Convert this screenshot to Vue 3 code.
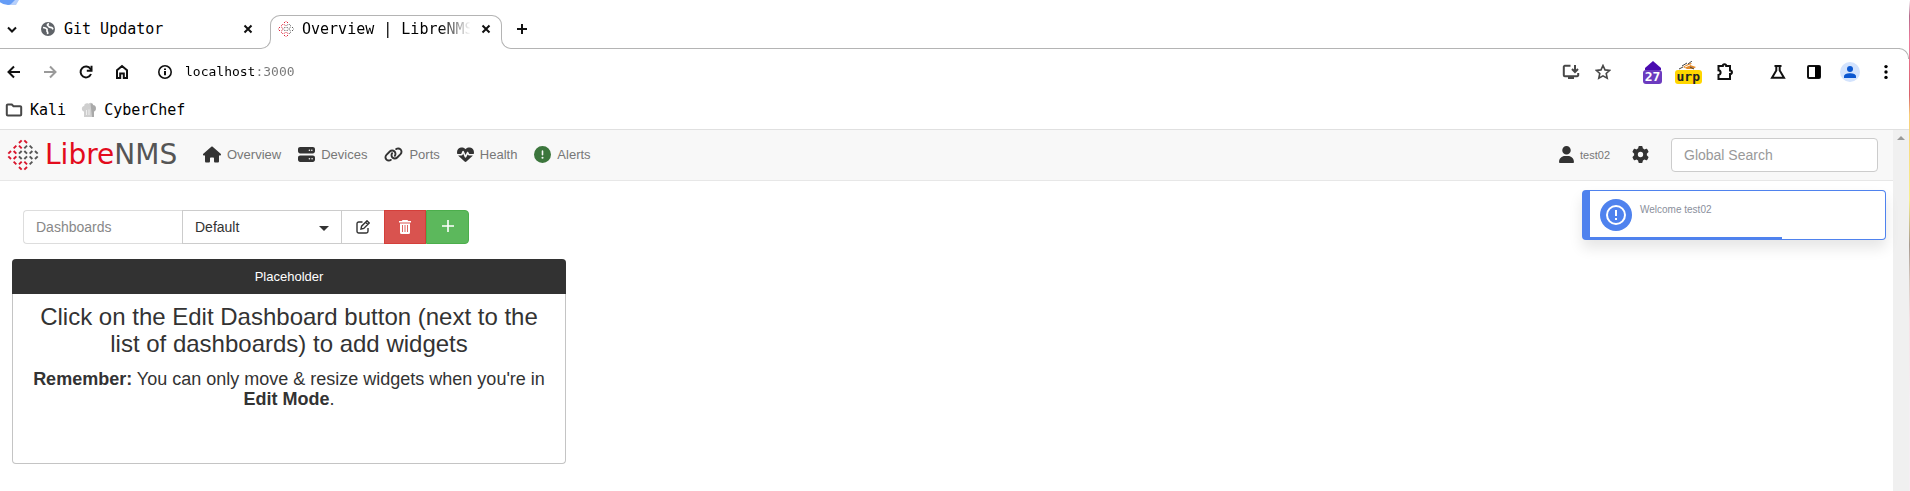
<script setup>
import { ref } from 'vue'

const rows = ['rr', 'rrgg', 'rrgggg', 'rrgggg', 'rrrg', 'rr']
const step = 16 / 3
const dashes = rows.flatMap((row, r) =>
  [...row].map((tone, c) => {
    const x = 16 + (c - (row.length - 1) / 2) * step
    const y = step / 2 + r * step
    const rising = (c % 2 === 0) === (r < 3)
    const d = 1.35
    return {
      x1: x - d,
      x2: x + d,
      y1: rising ? y + d : y - d,
      y2: rising ? y - d : y + d,
      stroke: tone === 'r' ? '#d9152c' : '#555555',
    }
  })
)

const menu = [
  { label: 'Overview', w: 18, box: '0 0 576 512', d: 'M575.8 255.5c0 18-15 32.1-32 32.1l-32 0 .7 160.2c0 2.7-.2 5.4-.5 8.1l0 16.2c0 22.1-17.9 40-40 40l-16 0c-1.1 0-2.2 0-3.3-.1c-1.4 .1-2.8 .1-4.2 .1L416 512l-24 0c-22.1 0-40-17.9-40-40l0-24 0-64c0-17.7-14.3-32-32-32l-64 0c-17.7 0-32 14.3-32 32l0 64 0 24c0 22.1-17.9 40-40 40l-24 0-31.9 0c-1.5 0-3-.1-4.5-.2c-1.2 .1-2.4 .2-3.6 .2l-16 0c-22.1 0-40-17.9-40-40l0-112c0-.9 0-1.9 .1-2.8l0-69.7-32 0c-18 0-32-14-32-32.1c0-9 3-17 10-24L266.4 8c7-7 15-8 22-8s15 2 21 7L564.8 231.5c8 7 12 15 11 24z' },
  { label: 'Devices', w: 17, box: '0 0 512 512', d: 'M64 32C28.7 32 0 60.7 0 96l0 64c0 35.3 28.7 64 64 64l384 0c35.3 0 64-28.7 64-64l0-64c0-35.3-28.7-64-64-64L64 32zm280 72a24 24 0 1 1 0 48 24 24 0 1 1 0-48zm48 24a24 24 0 1 1 48 0 24 24 0 1 1 -48 0zM64 288c-35.3 0-64 28.7-64 64l0 64c0 35.3 28.7 64 64 64l384 0c35.3 0 64-28.7 64-64l0-64c0-35.3-28.7-64-64-64L64 288zm280 72a24 24 0 1 1 0 48 24 24 0 1 1 0-48zm56 24a24 24 0 1 1 48 0 24 24 0 1 1 -48 0z' },
  { label: 'Ports', w: 19, box: '0 0 640 512', d: 'M579.8 267.7c56.5-56.5 56.5-148 0-204.5c-50-50-128.8-56.5-186.3-15.4l-1.6 1.1c-14.4 10.3-17.7 30.3-7.4 44.6s30.3 17.7 44.6 7.4l1.6-1.1c32.1-22.9 76-19.3 103.8 8.6c31.5 31.5 31.5 82.5 0 114L422.3 334.8c-31.5 31.5-82.5 31.5-114 0c-27.9-27.9-31.5-71.8-8.6-103.8l1.1-1.6c10.3-14.4 6.9-34.4-7.4-44.6s-34.4-6.9-44.6 7.4l-1.1 1.6C206.5 251.2 213 330 263 380c56.5 56.5 148 56.5 204.5 0L579.8 267.7zM60.2 244.3c-56.5 56.5-56.5 148 0 204.5c50 50 128.8 56.5 186.3 15.4l1.6-1.1c14.4-10.3 17.7-30.3 7.4-44.6s-30.3-17.7-44.6-7.4l-1.6 1.1c-32.1 22.9-76 19.3-103.8-8.6C74 372 74 321 105.5 289.5L217.7 177.2c31.5-31.5 82.5-31.5 114 0c27.9 27.9 31.5 71.8 8.6 103.9l-1.1 1.6c-10.3 14.4-6.9 34.4 7.4 44.6s34.4 6.9 44.6-7.4l1.1-1.6C433.5 260.8 427 182 377 132c-56.5-56.5-148-56.5-204.5 0L60.2 244.3z' },
  { label: 'Health', w: 17, box: '0 0 512 512', d: 'M228.3 469.1L47.6 300.4c-4.2-3.9-8.2-8.1-11.9-12.4l87 0c22.6 0 43-13.6 51.7-34.5l10.5-25.2 49.3 109.5c3.8 8.5 12.1 14 21.4 14.1s17.8-5 22-13.3L320 253.7l1.7 3.4c9.5 19 28.9 31 50.1 31l104.5 0c-3.7 4.3-7.7 8.5-11.9 12.4L283.7 469.1c-7.5 7-17.4 10.9-27.7 10.9s-20.2-3.9-27.7-10.9zM503.7 240l-132 0c-3 0-5.8-1.7-7.2-4.4l-23.2-46.3c-4.1-8.1-12.4-13.3-21.5-13.3s-17.4 5.1-21.5 13.3l-41.4 82.8L205.9 158.2c-3.9-8.7-12.7-14.3-22.2-14.1s-18.1 5.9-21.8 14.8l-31.8 76.3c-1.2 3-4.2 4.9-7.4 4.9L16 240c-2.6 0-5 .4-7.3 1.1C3 225.2 0 208.2 0 190.9l0-5.8c0-69.9 50.5-129.5 119.4-141C165 36.5 211.4 51.4 244 84l12 12 12-12c32.6-32.6 79-47.5 124.6-39.9C461.5 55.6 512 115.2 512 185.1l0 5.8c0 16.9-2.8 33.5-8.3 49.1z' },
  { label: 'Alerts', w: 17, box: '0 0 512 512', ok: true, d: 'M256 512A256 256 0 1 0 256 0a256 256 0 1 0 0 512zm0-384c13.3 0 24 10.7 24 24l0 112c0 13.3-10.7 24-24 24s-24-10.7-24-24l0-112c0-13.3 10.7-24 24-24zM224 352a32 32 0 1 1 64 0 32 32 0 1 1 -64 0z' },
]

const address = ref('localhost:3000')
const search = ref('')
const dashboard = ref('Default')
const progress = 65
</script>

<template>
  <div class="desktop">
    <svg width="0" height="0" class="defs" aria-hidden="true">
      <symbol id="mark" viewBox="0 0 32 32">
        <line v-for="(s, i) in dashes" :key="i" v-bind="s" stroke-width="1.9" />
      </symbol>
    </svg>
    <div class="browser">
      <header class="strip">
        <svg class="orb" width="19" height="5" viewBox="0 0 19 5"><circle cx="8" cy="-8" r="13" fill="#669df6" /><path d="M10 5L15 0h4L16 5z" fill="#b7d0fb" /></svg>
        <div class="strip-left">
          <button class="ico chevron" aria-label="Search tabs"><svg width="24" height="24" viewBox="0 0 24 24"><path d="M8 10.500l4 4 4-4" class="ln" /></svg></button>
          <svg class="globe" width="14" height="14" viewBox="0 0 14 14"><circle cx="7" cy="7" r="7" fill="#5f6368" /><path d="M2 5.500c2 .2 3.500.5 4 1.700.4 1.300-.6 1.600.4 2.600.5.600.2 1.500.3 2.400M8 1.600c-1.700.6-2.100 1.500-.9 2.300.9.600 1.200 1.700 2.600 1.500 1.200-.1 1.800.7 2.300 1.900" fill="none" stroke="#fff" stroke-width="1.700" /></svg>
          <span class="tab-title">Git Updator</span>
          <button class="ico close" aria-label="Close Git Updator"><svg width="16" height="16" viewBox="0 0 16 16"><path d="M4.500 4.500l7 7M11.500 4.500l-7 7" class="ln" /></svg></button>
        </div>
        <i class="foot foot-l"></i>
        <div class="tab">
          <svg width="16" height="16" class="fav"><use href="#mark" /></svg>
          <span class="tab-title fade">Overview | LibreNMS</span>
          <button class="ico close" aria-label="Close Overview"><svg width="16" height="16" viewBox="0 0 16 16"><path d="M4.500 4.500l7 7M11.500 4.500l-7 7" class="ln" /></svg></button>
        </div>
        <i class="foot foot-r"></i>
        <div class="strip-rest">
          <button class="ico" aria-label="New tab"><svg width="16" height="16" viewBox="0 0 16 16"><path d="M8 3v10M3 8h10" class="ln" /></svg></button>
        </div>
      </header>

      <div class="toolbar">
        <button class="ico" aria-label="Back"><svg width="16" height="16" viewBox="0 0 16 16"><path d="M14 8H3M8 2.500L2.500 8 8 13.500" class="ln" /></svg></button>
        <button class="ico" aria-label="Forward"><svg width="16" height="16" viewBox="0 0 16 16"><path d="M2 8h11M8 2.500L13.500 8 8 13.500" class="ln dim" /></svg></button>
        <button class="ico" aria-label="Reload"><svg width="16" height="16" viewBox="0 0 16 16"><path d="M13 10A5.400 5.400 0 1 1 12.500 5L13.500 6.500" class="ln" /><path d="M13.500 1.800v5H8.800" class="ln" /></svg></button>
        <button class="ico" aria-label="Home"><svg width="16" height="16" viewBox="0 0 16 16"><path d="M3 14V6.300L8 2l5 4.300V14H9.800V9.500H6.200V14z" class="ln" /></svg></button>
        <button class="ico info" aria-label="Site information"><svg width="16" height="16" viewBox="0 0 16 16"><circle cx="8" cy="8" r="6.200" class="ln thin" /><path d="M8 7v4.200M8 4.400v1.500" class="ln" /></svg></button>
        <input class="address" v-model="address" type="text" aria-label="Address" />
        <div class="tools">
          <button class="ico" aria-label="Install page"><svg width="18" height="16" viewBox="0 0 18 16"><path d="M8.500 1.800H2.800a1 1 0 0 0-1 1v8.400a1 1 0 0 0 1 1h12.400a1 1 0 0 0 1-1V9M13 1v6.500M10 5l3 3 3-3" class="ln soft" /><path d="M6 13h6v2H6z" fill="#474747" /></svg></button>
          <button class="ico star" aria-label="Bookmark page"><svg width="16" height="16" viewBox="0 0 16 16"><path d="M8 1.500l2 4.400 4.700.5-3.500 3.100 1 4.700L8 11.800l-4.200 2.400 1-4.700-3.500-3.100 4.700-.5z" class="ln soft thin" /></svg></button>
          <button class="ext violet" aria-label="Extension, 27 items"><svg width="20" height="9" viewBox="0 0 20 9"><path d="M10 0l8 7v2H2V7z" fill="#4a0bb0" /></svg><b>27</b></button>
          <button class="ext yellow" aria-label="Extension urp"><svg width="20" height="9" viewBox="0 0 20 9"><path d="M5 6c3-2 6-4 9-4l-2 2 6 2-3 2H9z" fill="#e58b2a" /><path d="M4 5l5-3M10 3l4-3M1 8l4-2M12 6l4 2" stroke="#444" stroke-width="1" /><path d="M7 6l5-2" stroke="#fff" /></svg><b>urp</b></button>
          <button class="ico puzzle" aria-label="Extensions"><svg width="18" height="18" viewBox="0 0 18 18"><path d="M2.500 3h4.300C6.800.8 10.200.8 10.200 3H14v4.500c2.600 0 2.600 3.600 0 3.600V16H2.500v-4.100c2.800-.3 2.800-4.300 0-4.600z" class="ln" /></svg></button>
          <button class="ico flask" aria-label="Experiments"><svg width="16" height="16" viewBox="0 0 16 16"><path d="M4.500 2h7M6.300 2v4.500L2 13.800h12L9.700 6.500V2" class="ln" /></svg></button>
          <button class="ico" aria-label="Side panel"><svg width="16" height="16" viewBox="0 0 16 16"><rect x="2" y="2" width="12" height="12" rx="1" class="ln" /><path d="M9 2h5v12H9z" /></svg></button>
          <button class="ico profile" aria-label="Profile"><svg width="20" height="20" viewBox="0 0 20 20"><circle cx="10" cy="10" r="10" fill="#d3e3fd" /><circle cx="10" cy="7" r="3" fill="#0b57d0" /><path d="M4 16v-1.500C4 12 7.500 11.300 10 11.300s6 .7 6 3.200V16z" fill="#0b57d0" /></svg></button>
          <button class="ico" aria-label="Menu"><svg width="16" height="16" viewBox="0 0 16 16"><circle cx="8" cy="2.600" r="1.700" /><circle cx="8" cy="8" r="1.700" /><circle cx="8" cy="13.400" r="1.700" /></svg></button>
        </div>
      </div>

      <nav class="bookmarks" aria-label="Bookmarks">
        <a href="#"><svg width="18" height="14" viewBox="0 0 18 14"><path d="M1.800 2.500a1 1 0 0 1 1-1h4l1.700 1.700h6.700a1 1 0 0 1 1 1v7.300a1 1 0 0 1-1 1H2.800a1 1 0 0 1-1-1z" class="ln soft" /></svg>Kali</a>
        <a href="#"><svg width="16" height="16" viewBox="0 0 16 16"><path d="M3 15V9.500C.3 9 0 4.500 3.200 4 3 1.500 6 .8 7.500 1.800 9.500 0 12 1 12.200 3c3.700.2 3.600 5.700.8 6.500V15z" fill="#cfcfcf" /><path d="M9.500 1.500c1.600 0 2.500.7 2.700 1.700 3.500.2 3.400 5.500.8 6.300V15h-2z" fill="#a9a9a9" /><path d="M5.500 8v5M8 7.500V13" stroke="#eee" /></svg>CyberChef</a>
      </nav>

      <div class="viewport">
        <div class="page">
          <nav class="navbar" aria-label="Main">
            <a class="brand" href="#"><svg width="32" height="32"><use href="#mark" /></svg><span><em>Libre</em>NMS</span></a>
            <ul class="menu">
              <li v-for="m in menu" :key="m.label">
                <a href="#"><svg :width="m.w" height="17" :viewBox="m.box" :class="{ ok: m.ok }"><path :d="m.d" /></svg>{{ m.label }}</a>
              </li>
            </ul>
            <div class="account">
              <a class="user" href="#"><svg width="15" height="17" viewBox="0 0 448 512"><path d="M224 256A128 128 0 1 0 224 0a128 128 0 1 0 0 256zm-45.700 48C79.800 304 0 383.800 0 482.300C0 498.700 13.300 512 29.700 512l388.600 0c16.400 0 29.700-13.300 29.700-29.700C448 383.800 368.200 304 269.700 304l-91.400 0z" /></svg>test02</a>
              <a class="gear" href="#" aria-label="Settings"><svg width="17" height="17" viewBox="0 0 512 512"><path d="M495.900 166.600c3.200 8.700 .5 18.400-6.400 24.600l-43.300 39.400c1.100 8.300 1.700 16.800 1.700 25.400s-.6 17.100-1.700 25.400l43.300 39.400c6.900 6.200 9.600 15.900 6.400 24.600c-4.400 11.900-9.700 23.300-15.800 34.300l-4.700 8.100c-6.600 11-14 21.400-22.100 31.200c-5.900 7.200-15.700 9.600-24.500 6.800l-55.700-17.700c-13.400 10.300-28.200 18.900-44 25.400l-12.500 57.100c-2 9.100-9 16.300-18.200 17.800c-13.800 2.300-28 3.500-42.500 3.500s-28.700-1.200-42.500-3.500c-9.200-1.500-16.200-8.700-18.200-17.800l-12.500-57.100c-15.800-6.500-30.600-15.100-44-25.400L83.100 425.900c-8.800 2.800-18.600 .3-24.500-6.800c-8.100-9.800-15.500-20.200-22.100-31.200l-4.700-8.100c-6.100-11-11.400-22.400-15.800-34.300c-3.200-8.700-.5-18.400 6.400-24.600l43.300-39.400C64.600 273.100 64 264.600 64 256s.6-17.100 1.700-25.400L22.400 191.200c-6.900-6.200-9.600-15.900-6.400-24.600c4.400-11.900 9.700-23.300 15.800-34.300l4.700-8.100c6.600-11 14-21.400 22.100-31.200c5.900-7.200 15.700-9.600 24.500-6.800l55.700 17.700c13.400-10.300 28.200-18.900 44-25.400l12.500-57.100c2-9.100 9-16.300 18.200-17.800C227.300 1.200 241.500 0 256 0s28.700 1.200 42.500 3.500c9.200 1.500 16.200 8.700 18.200 17.800l12.500 57.100c15.800 6.500 30.600 15.100 44 25.400l55.700-17.700c8.800-2.800 18.600-.3 24.500 6.800c8.100 9.800 15.500 20.200 22.100 31.200l4.700 8.100c6.100 11 11.400 22.400 15.800 34.300zM256 336a80 80 0 1 0 0-160 80 80 0 1 0 0 160z" /></svg></a>
              <input class="search" v-model="search" type="search" placeholder="Global Search" aria-label="Global Search" />
            </div>
          </nav>

          <main>
            <form class="controls" @submit.prevent>
              <label for="dash">Dashboards</label>
              <div class="picker">
                <select id="dash" v-model="dashboard"><option>Default</option></select>
                <svg width="10" height="5" viewBox="0 0 10 5"><path d="M0 0h10L5 5z" /></svg>
              </div>
              <button class="edit" type="button" aria-label="Edit dashboard"><svg width="14" height="14" viewBox="0 0 14 14"><path d="M6.500 2H2.700A1.700 1.700 0 0 0 1 3.700v7.600A1.700 1.700 0 0 0 2.700 13h7.600a1.700 1.700 0 0 0 1.700-1.700V8" /><path d="M5 9l.6-2.800L11 .8l2.200 2.200-5.400 5.400zM9.600 2.200l2.200 2.200" /></svg></button>
              <button class="remove" type="button" aria-label="Remove dashboard"><svg width="14" height="16" viewBox="0 0 14 16"><path fill="#fff" d="M4.500 1h5l.7 1H13v1.500H1V2h2.800zM2 4.500h10V13.500a1.500 1.500 0 0 1-1.500 1.500h-7A1.500 1.500 0 0 1 2 13.500z" /><path d="M4.500 6v7M7 6v7M9.500 6v7" stroke="#d9534f" stroke-width=".9" /></svg></button>
              <button class="add" type="button" aria-label="New dashboard"><svg width="14" height="14" viewBox="0 0 14 14"><path d="M7 1v12M1 7h12" stroke="#fff" stroke-width="1.600" /></svg></button>
            </form>

            <section class="widget">
              <header>Placeholder</header>
              <div class="widget-body">
                <h3>Click on the Edit Dashboard button (next to the list of dashboards) to add widgets</h3>
                <h4><strong>Remember:</strong> You can only move &amp; resize widgets when you're in <strong>Edit Mode</strong>.</h4>
              </div>
            </section>

            <div class="toast" role="status">
              <svg width="32" height="32" viewBox="0 0 32 32"><circle cx="16" cy="16" r="16" fill="#4f82ee" /><circle cx="16" cy="16" r="9" fill="none" stroke="#fff" stroke-width="2" /><path d="M16 11v6M16 19v2" stroke="#fff" stroke-width="2" /></svg>
              <p>Welcome test02</p>
              <div class="progress" :style="{ width: progress + '%' }"></div>
            </div>
          </main>
        </div>
        <div class="scrollbar"><svg width="8" height="4" viewBox="0 0 8 4"><path d="M0 4l4-4 4 4z" fill="#9a9a9a" /></svg></div>
      </div>
    </div>
    <div class="wallpaper"></div>
  </div>
</template>

<style>
body { background: #fff; }
</style>

<style scoped>
* { box-sizing: border-box; }
svg { display: block; flex: none; }
a { text-decoration: none; color: inherit; }
button { font: inherit; padding: 0; margin: 0; background: none; border: 0; }
.defs { position: absolute; }
.desktop { display: flex; min-height: 100vh; font-family: "Liberation Sans", Arial, sans-serif; }
.browser { flex: 1; min-width: 0; display: flex; flex-direction: column; }
.wallpaper { width: 1px; background: linear-gradient(#fff 0, #b56b8c 16px, #f07a9c 40px, #d9606c 95px, #f8cf7a 115px, #f8ef90 200px, #a89a90 245px, #d8c8c0 280px, #fbdce4 320px, #f6eef4 400px); }

.ln { fill: none; stroke: #111; stroke-width: 2; }
.ln.thin { stroke-width: 1.6; }
.ln.soft { stroke: #474747; }
.ln.dim { stroke: #9a9a9a; }
.ico { display: flex; align-items: center; justify-content: center; flex: none; }

.strip { position: relative; display: flex; align-items: flex-end; height: 49px; font: 15px/20px "DejaVu Sans Mono", monospace; color: #000; }
.orb { position: absolute; top: 0; left: 0; }
.strip-left { display: flex; align-items: center; width: 260px; height: 34px; padding: 0 4px 6px 0; border-bottom: 1px solid #b4b4b4; }
.globe { margin: 0 9px 0 17px; }
.strip-left .close { margin-left: auto; }
.foot { width: 11px; height: 11px; border-bottom: 1px solid #b4b4b4; }
.foot-l { margin-right: -1px; border-right: 1px solid #b4b4b4; border-bottom-right-radius: 10px; }
.foot-r { margin-left: -1px; border-left: 1px solid #b4b4b4; border-bottom-left-radius: 10px; }
.tab { position: relative; display: flex; align-items: center; width: 232px; height: 34px; padding: 0 8px 6px; }
.tab::before { content: ""; position: absolute; inset: 0 0 10px; border: 1px solid #b4b4b4; border-bottom: 0; border-radius: 10px 10px 0 0; pointer-events: none; }
.fav { margin-right: 8px; }
.tab-title { white-space: nowrap; }
.fade { flex: 1; margin-right: 4px; mask-image: linear-gradient(90deg, #000 80%, transparent 98%); }
.strip-rest { display: flex; align-items: center; flex: 1; height: 34px; margin-right: 9px; padding: 0 0 6px 2px; border-bottom: 1px solid #b4b4b4; }

.toolbar { position: relative; display: flex; align-items: center; gap: 20px; height: 46px; padding: 0 15px 0 6px; }
.toolbar::after { content: ""; position: absolute; top: -1px; right: 0; width: 10px; height: 10px; border-top: 1px solid #b4b4b4; border-right: 1px solid #b4b4b4; border-top-right-radius: 10px; pointer-events: none; }
.info { margin-left: 7px; }
.address { flex: 1; min-width: 0; margin-left: -8px; padding: 0; border: 0; outline: 0; font: 13px/20px "DejaVu Sans Mono", monospace; color: transparent; background: linear-gradient(90deg, #000 70px, #777 70px); background-clip: text; }
.tools { display: flex; align-items: center; gap: 20px; }
.star { margin-left: -5px; margin-right: 12px; }
.ext { display: flex; flex-direction: column; align-items: center; height: 23px; margin-top: 1px; }
.ext b { padding: 0 2px; height: 14px; border-radius: 3px; font: bold 13px/14px "DejaVu Sans Mono", monospace; }
.violet b { background: #6c3bbf; color: #fff; }
.yellow { margin-left: -8px; }
.yellow b { background: #ffd600; color: #222; }
.puzzle { margin-left: -6px; }
.flask { margin-left: 16px; }
.profile { margin: 0 -2px; }

.bookmarks { display: flex; align-items: center; gap: 15px; height: 34px; padding: 0 5px 5px; font: 15px/20px "DejaVu Sans Mono", monospace; color: #000; }
.bookmarks a { display: flex; align-items: center; gap: 7px; }

.viewport { flex: 1; display: flex; border-top: 1px solid #e0e0e0; }
.page { flex: 1; min-width: 0; color: #333; }
.scrollbar { display: flex; justify-content: center; width: 16px; padding-top: 6px; background: #f0f0f0; }
.navbar { display: flex; align-items: center; height: 51px; padding: 0 15px 1px 7px; background: #f8f8f8; border-bottom: 1px solid #e7e7e7; color: #777; font-size: 13px; }
.navbar svg { fill: #333; }
.navbar .ok { fill: #3c763d; }
.brand { display: flex; align-items: center; gap: 6px; width: 196px; font: 28px/32px "DejaVu Sans", sans-serif; color: #555; }
.brand em { font-style: normal; color: #e30b1c; }
.menu { display: flex; gap: 17px; margin: 0; padding: 0; list-style: none; }
.menu a { display: flex; align-items: center; gap: 6px; }
.account { display: flex; align-items: center; margin-left: auto; }
.user { display: flex; align-items: center; gap: 6px; font-size: 11px; }
.gear { margin: 0 22px; }
.search { width: 207px; height: 34px; padding: 0 12px; border: 1px solid #ccc; border-radius: 4px; background: #fff; font: 14px/20px "Liberation Sans", Arial, sans-serif; color: #555; outline: 0; appearance: none; }
.search::placeholder { color: #999; opacity: 1; }

main { position: relative; padding: 29px 12px 27px; }
.controls { display: flex; margin-left: 11px; font-size: 14px; line-height: 20px; }
.controls label { width: 159px; height: 34px; padding: 6px 12px; border: 1px solid #ddd; border-right: 0; border-radius: 4px 0 0 4px; color: #888; }
.picker { position: relative; width: 160px; }
.picker select { width: 100%; height: 34px; padding: 0 12px; border: 1px solid #ccc; border-radius: 0; background: #fff; color: #333; font: inherit; appearance: none; }
.picker svg { position: absolute; right: 13px; top: 16px; fill: #333; pointer-events: none; }
.controls button { display: flex; align-items: center; justify-content: center; width: 43px; height: 34px; border: 1px solid #ccc; }
.controls .edit { width: 42px; border-left: 0; border-right: 0; }
.edit svg { fill: none; stroke: #333; stroke-width: 1.4; }
.controls .remove { width: 42px; background: #d9534f; border-color: #d43f3a; }
.controls .add { background: #5cb85c; border-color: #4cae4c; border-radius: 0 4px 4px 0; padding-bottom: 2px; }

.widget { width: 554px; max-width: 100%; min-height: 205px; margin-top: 15px; border: 1px solid #c4c4c4; border-top: 0; border-radius: 4px; text-align: center; }
.widget header { margin: 0 -1px; border-radius: 4px 4px 0 0; background: #323232; color: #fff; font-size: 13px; line-height: 35px; }
.widget-body { padding: 9px 12px; }
.widget h3 { margin: 0 0 12px; font-size: 24px; line-height: 27px; font-weight: normal; }
.widget h4 { margin: 0; font-size: 18px; line-height: 20px; font-weight: normal; }

.toast { position: absolute; top: 9px; right: 7px; display: flex; gap: 8px; width: 304px; height: 50px; padding: 8px 10px; background: #fff; border: 1px solid #4f82ee; border-left-width: 8px; border-radius: 4px; box-shadow: 0 8px 14px rgba(0, 0, 0, 0.1); }
.toast p { margin: 5px 0 0; font-size: 10px; line-height: 12px; color: #8a8f9c; }
.progress { position: absolute; left: 0; bottom: 0; height: 2px; background: #4f82ee; }
</style>
